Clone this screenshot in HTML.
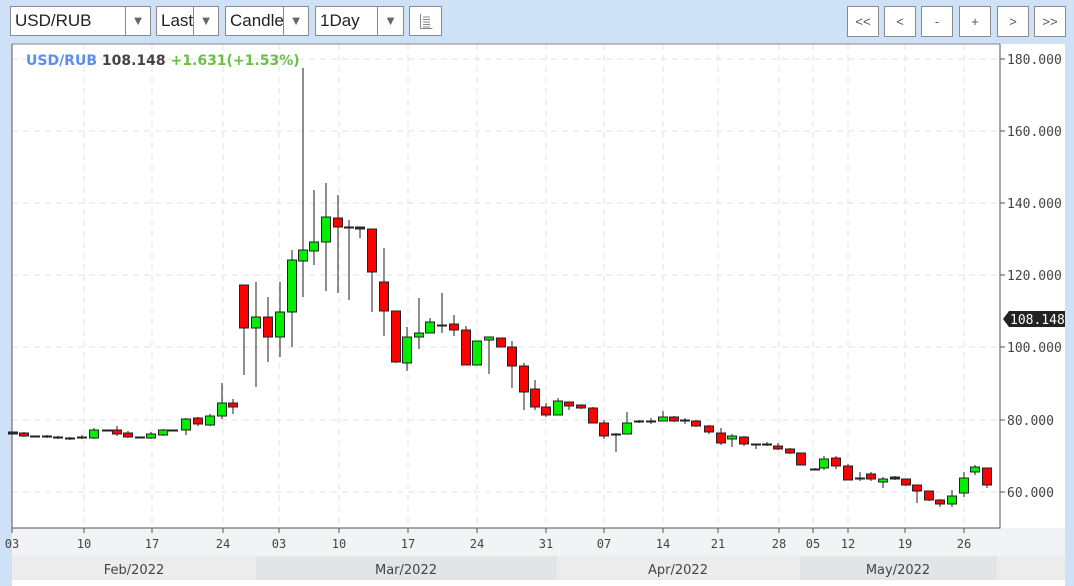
<!DOCTYPE html>
<html><head><meta charset="utf-8"><style>
body{margin:0;width:1074px;height:586px;background:#cfe1f7;font-family:"Liberation Sans",sans-serif;position:relative;overflow:hidden}
.b{position:absolute;top:6px;height:30px;background:#fff;border:1px solid #8a8a8a;box-sizing:border-box;font-size:17px;color:#222;line-height:28px;padding-left:4px}
.b .d{position:absolute;top:0;bottom:0;border-left:1px solid #8a8a8a;width:24px;right:0;color:#666;font-size:13px;text-align:center}
.n{position:absolute;top:6px;width:32px;height:31px;background:#fff;border:1px solid #8a8a8a;box-sizing:border-box;text-align:center;line-height:29px;font-size:13px;color:#555}
svg{position:absolute;left:0;top:0}
</style></head><body>
<div class="b" style="left:10px;width:141px">USD/RUB<span class="d">▼</span></div>
<div class="b" style="left:156px;width:63px">Last<span class="d">▼</span></div>
<div class="b" style="left:225px;width:84px">Candle<span class="d">▼</span></div>
<div class="b" style="left:315px;width:89px">1Day<span class="d" style="width:25px">▼</span></div>
<div class="n" style="left:409px;width:33px;height:30px"><svg width="31" height="28"><g stroke="#888" stroke-width="1" fill="none"><path d="M10.5 7v14.5h12M13 10h7M13 12.5h7M13 15h7M13 17.5h7M13 20h7"/></g></svg></div>
<div class="n" style="left:847px">&lt;&lt;</div>
<div class="n" style="left:884px">&lt;</div>
<div class="n" style="left:921px">-</div>
<div class="n" style="left:959px">+</div>
<div class="n" style="left:997px">&gt;</div>
<div class="n" style="left:1034px">&gt;&gt;</div>
<svg id="c" width="1074" height="586" style="top:0"></svg>
<script>
var s='';
s+='<rect x="12" y="44" width="1053" height="484" fill="#fff"/>';
s+='<rect x="12" y="528" width="1053" height="28" fill="#f2f3f5"/>';
s+='<rect x="12" y="556" width="244" height="24" fill="#ececed"/><rect x="256" y="556" width="301" height="24" fill="#e3e4e6"/><rect x="557" y="556" width="243" height="24" fill="#ececed"/><rect x="800" y="556" width="197" height="24" fill="#e3e4e6"/><rect x="997" y="556" width="68" height="24" fill="#ececed"/><rect x="12" y="580" width="1053" height="6" fill="#fff"/>';
var hy=[59,131,203,275,347,420,492],lab=['180.000','160.000','140.000','120.000','100.000','80.000','60.000'];
hy.forEach(function(y,i){s+='<line x1="12" x2="1000" y1="'+y+'" y2="'+y+'" stroke="#e2e2e2" stroke-dasharray="6,5"/><line x1="1000" x2="1005" y1="'+y+'" y2="'+y+'" stroke="#555"/><text x="1007" y="'+(y+5)+'" font-size="13" fill="#444" font-family="DejaVu Sans Mono,monospace">'+lab[i]+'</text>';});
var tx=[12,84,152,223,279,339,408,477,546,604,663,718,779,813,848,905,964],tl=['03','10','17','24','03','10','17','24','31','07','14','21','28','05','12','19','26'];
tx.forEach(function(x,i){s+='<line x1="'+x+'" x2="'+x+'" y1="44" y2="528" stroke="#e2e2e2" stroke-dasharray="6,5"/><line x1="'+x+'" x2="'+x+'" y1="528" y2="533" stroke="#555"/><text x="'+x+'" y="548" font-size="12" fill="#444" text-anchor="middle" font-family="DejaVu Sans Mono,monospace">'+tl[i]+'</text>';});
[['Feb/2022',134],['Mar/2022',406],['Apr/2022',678],['May/2022',898]].forEach(function(m){s+='<text x="'+m[1]+'" y="574" font-size="13" fill="#444" text-anchor="middle" font-family="DejaVu Sans,sans-serif">'+m[0]+'</text>';});
s+='<path d="M12 44V528H1000V44" fill="none" stroke="#555"/><line x1="12" x2="1000" y1="44" y2="44" stroke="#888"/>';
var C=[[13,432,432,434,434,'k'],[24,432,433,436,437,'r'],[35,436,436,437,437,'k'],[47,435,436,437,438,'k'],[58,436,437,438,439,'k'],[70,437,438,438,440,'k'],[82,435,437,438,439,'g'],[94,428,430,438,439,'g'],[107,430,430,431,431,'k'],[117,426,430,434,436,'r'],[128,431,433,437,438,'r'],[140,437,437,438,438,'k'],[151,432,434,438,439,'g'],[163,429,430,435,436,'g'],[173,430,430,431,431,'k'],[186,418,419,430,435,'g'],[198,417,418,424,426,'r'],[210,414,416,425,426,'g'],[222,383,403,416,419,'g'],[233,399,403,407,414,'r'],[244,285,285,328,375,'r'],[256,282,317,328,387,'g'],[268,297,317,337,362,'r'],[280,282,312,337,357,'g'],[292,250,260,312,347,'g'],[303,68,250,261,297,'g'],[314,190,242,251,265,'g'],[326,183,217,242,291,'g'],[338,195,218,227,293,'r'],[349,220,227,227,300,'k'],[360,227,227,229,238,'k'],[372,229,229,272,312,'r'],[384,248,282,311,336,'r'],[396,311,311,362,363,'r'],[407,327,337,363,371,'g'],[419,298,333,337,349,'g'],[430,318,322,333,333,'g'],[442,293,325,326,333,'k'],[454,315,324,330,336,'r'],[466,326,330,365,365,'r'],[477,341,341,365,365,'g'],[489,337,337,340,374,'g'],[501,338,338,347,347,'r'],[512,341,347,366,388,'r'],[524,363,366,392,410,'r'],[535,380,389,407,410,'r'],[546,403,407,415,417,'r'],[558,398,401,415,415,'g'],[569,402,402,406,410,'r'],[581,405,405,408,409,'r'],[593,407,408,423,423,'r'],[604,420,423,436,439,'r'],[616,433,434,434,452,'k'],[627,412,423,434,434,'g'],[639,420,421,422,423,'k'],[651,418,421,421,424,'k'],[663,411,417,421,421,'g'],[674,416,417,421,422,'r'],[685,418,420,421,424,'k'],[696,420,421,426,427,'r'],[709,425,426,432,434,'r'],[721,428,433,443,445,'r'],[732,434,436,439,447,'g'],[744,436,437,444,446,'r'],[756,444,444,444,449,'k'],[767,442,444,445,446,'k'],[778,443,446,449,450,'r'],[790,448,449,453,454,'r'],[801,453,453,465,465,'r'],[815,468,469,469,470,'k'],[824,456,459,468,470,'g'],[836,456,458,466,469,'r'],[848,464,466,480,480,'r'],[860,472,478,478,481,'k'],[871,472,474,479,481,'r'],[883,477,479,482,488,'g'],[895,476,477,479,480,'k'],[906,479,479,485,486,'r'],[917,485,485,491,503,'r'],[929,491,491,500,501,'r'],[940,499,500,504,507,'r'],[952,490,496,504,507,'g'],[964,472,478,493,497,'g'],[975,465,467,472,475,'g'],[987,468,468,485,488,'r']];
C.forEach(function(c){var x=c[0];s+='<line x1="'+x+'" x2="'+x+'" y1="'+c[1]+'" y2="'+c[4]+'" stroke="#444" stroke-width="1.2"/>';var h=Math.max(c[3]-c[2],1);var f=c[5]=='g'?'#00ee00':c[5]=='r'?'#ff0000':'#333';s+='<rect x="'+(x-4.5)+'" y="'+c[2]+'" width="9" height="'+h+'" fill="'+f+'" stroke="#222" stroke-width="1"/>';});
s+='<path d="M1003 319L1009 311H1065V327H1009Z" fill="#222"/><text x="1010" y="324" font-size="13" fill="#fff" font-family="DejaVu Sans Mono,monospace">108.148</text>';
s+='<text x="26" y="65" font-size="14" font-weight="bold" font-family="DejaVu Sans,sans-serif"><tspan fill="#5b8ef0">USD/RUB</tspan> <tspan fill="#444">108.148</tspan> <tspan fill="#6cbf45">+1.631(+1.53%)</tspan></text>';
document.getElementById('c').innerHTML=s;
</script>
</body></html>
